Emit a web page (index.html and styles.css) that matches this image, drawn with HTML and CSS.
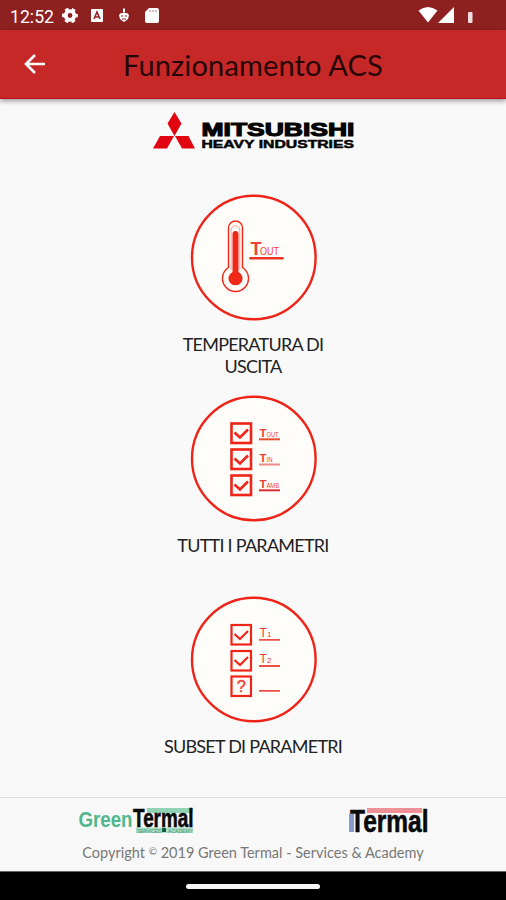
FILE: index.html
```html
<!DOCTYPE html>
<html lang="it">
<head>
<meta charset="utf-8">
<title>Funzionamento ACS</title>
<link rel="stylesheet" href="styles.css">
</head>
<body>
<div class="screen">
  <div class="status">
    <svg width="506" height="30" viewBox="0 0 506 30">
      <text class="clock" x="10" y="22.5" textLength="44" lengthAdjust="spacingAndGlyphs">12:52</text>
      <g fill="#fff">
        <circle cx="70" cy="15.5" r="4.3" fill="none" stroke="#fff" stroke-width="3.8"/>
        <circle cx="70" cy="15.5" r="6.600" fill="none" stroke="#fff" stroke-width="2.600" stroke-dasharray="3.600 3.310" stroke-dashoffset="1.800"/>
        <rect x="91" y="9" width="12" height="13" rx="1"/>
        <path d="M94 19l3-7 3 7M95 17h4" fill="none" stroke="#8f2020" stroke-width="1.500"/>
        <path d="M123 8.500h2v4h-2zM119 15q1-2 3-2h4q2 0 3 2l-1 4-4 3-4-3z"/>
        <path d="M121 16h2M125 16h2M122 19h4" stroke="#8f2020" stroke-width="1.200"/>
        <path d="M149 8h8q2 0 2 2v11q0 2-2 2h-10q-2 0-2-2v-9z"/>
        <path d="M150 10v2M153 10v2M156 10v2" stroke="#b87070" stroke-width="1"/>
        <path d="M418.500 10.500Q428 3.500 437.500 10.500L428 22.500z"/>
        <path d="M454 7v16h-16z"/>
        <rect x="468" y="12" width="4.500" height="11" rx="1" opacity=".85"/>
      </g>
    </svg>
  </div>
  <header class="appbar">
    <svg class="back" width="22" height="22" viewBox="0 0 22 22"><path d="M21 11H3M11 2L2 11l9 9" fill="none" stroke="#fff" stroke-width="2.600"/></svg>
    <h1>Funzionamento ACS</h1>
  </header>
  <main>
    <svg class="brand" width="204" height="40" viewBox="0 0 204 40">
      <path fill="#e00510" d="M21.500 0l7 11.500-7 12.500-7-12.500zM21 24l-7 12.500H0l7-12.500zM22 24l7 12.500H42l-6.500-12.500z"/>
      <text class="mitsu" x="48.500" y="23.800" font-size="18" textLength="153" lengthAdjust="spacingAndGlyphs">MITSUBISHI</text>
      <text class="heavy" x="48.500" y="36" font-size="11.500" textLength="152.500" lengthAdjust="spacingAndGlyphs">HEAVY INDUSTRIES</text>
    </svg>
    <section class="item">
      <svg class="disc" width="128" height="128" viewBox="0 0 128 128">
        <circle class="ring" cx="63.800" cy="63.500" r="61.800"/>
        <g fill="none" stroke="#f02818" stroke-width="1.400">
          <path d="M38.500 73.500V34a7 7 0 0 1 14 0v39.500a13 13 0 1 1-14 0z"/>
          <path d="M41.200 76V36a4.300 4.300 0 0 1 8.600 0v40" stroke-width=".7" opacity=".6"/>
        </g>
        <path fill="#f02818" d="M42.500 78V40q0-3 3-3t3 3v38a7 7 0 1 1-6 0z"/>
        <text class="tag strong" x="60.500" y="60.500" font-size="18">T</text>
        <text class="tag" x="70" y="60.500" font-size="10" textLength="19" lengthAdjust="spacingAndGlyphs">OUT</text>
        <path d="M60.500 64.300h32" stroke="#e83422" stroke-width="2.600" stroke-linecap="round"/>
      </svg>
      <p>TEMPERATURA DI<br>USCITA</p>
    </section>
    <section class="item">
      <svg class="disc" width="128" height="128" viewBox="0 0 128 128">
        <circle class="ring" cx="63.800" cy="63.500" r="61.800"/>
        <g class="box">
          <rect x="41.500" y="28.500" width="19.500" height="19.500"/><path d="M44.500 37.500l5.500 5 8-8"/>
          <rect x="41.500" y="54.500" width="19.500" height="19.500"/><path d="M44.500 63.500l5.500 5 8-8"/>
          <rect x="41.500" y="80.500" width="19.500" height="19.500"/><path d="M44.500 89.500l5.500 5 8-8"/>
        </g>
        <text class="tag strong" x="69.500" y="41.500" font-size="11.500">T</text><text class="tag" x="76.500" y="41.500" font-size="7" textLength="12" lengthAdjust="spacingAndGlyphs">OUT</text>
        <text class="tag strong" x="69.500" y="66.500" font-size="11.500">T</text><text class="tag" x="76.500" y="66.500" font-size="7" textLength="6" lengthAdjust="spacingAndGlyphs">IN</text>
        <text class="tag strong" x="69.500" y="92.500" font-size="11.500">T</text><text class="tag" x="76.500" y="92.500" font-size="7" textLength="12.500" lengthAdjust="spacingAndGlyphs">AMB</text>
        <path d="M69 44.300h21" stroke="#e85030" stroke-width="2"/>
        <path d="M69 69.500h21" stroke="#f08a88" stroke-width="2"/>
        <path d="M69 95.300h21" stroke="#d83030" stroke-width="2"/>
      </svg>
      <p>TUTTI I PARAMETRI</p>
    </section>
    <section class="item subset">
      <svg class="disc" width="128" height="128" viewBox="0 0 128 128">
        <circle class="ring" cx="63.800" cy="63.500" r="61.800"/>
        <g class="box thin">
          <rect x="41.500" y="29" width="19.500" height="19.500"/><path d="M44.500 38l5.500 5 8-8"/>
          <rect x="41.500" y="55" width="19.500" height="19.500"/><path d="M44.500 64l5.500 5 8-8"/>
          <rect x="41.500" y="80.500" width="19.500" height="19.500"/>
        </g>
        <text class="tag mark" x="51.300" y="96" font-size="16.500" text-anchor="middle">?</text>
        <text class="tag" x="69.500" y="41" font-size="12">T</text><text class="tag" x="77" y="41" font-size="8">1</text>
        <text class="tag" x="69.500" y="67" font-size="12">T</text><text class="tag" x="77" y="67" font-size="8">2</text>
        <path d="M69 43.800h21M69 70h21M69 94.800h21" stroke="#ed5145" stroke-width="1.800"/>
      </svg>
      <p>SUBSET DI PARAMETRI</p>
    </section>
  </main>
  <footer>
    <div class="logos">
      <svg width="118" height="30" viewBox="0 0 118 30">
        <rect x="69" y="1" width="46" height="5" fill="#91d3b5"/>
        <rect x="58" y="20.500" width="57" height="5.500" fill="#a9dcc5"/>
        <rect x="84" y="21" width="4" height="4" fill="#145b40"/>
        <text class="micro" x="59" y="25.500" textLength="24">SERVICES</text>
        <text class="micro" x="90" y="25.500" textLength="25">ACADEMY</text>
        <text class="logo green" x="0.500" y="20" font-size="22" textLength="54" lengthAdjust="spacingAndGlyphs">Green</text>
        <text class="logo dark" x="55" y="19.500" font-size="25" textLength="60.500" lengthAdjust="spacingAndGlyphs">Termal</text>
      </svg>
      <svg width="82" height="30" viewBox="0 0 82 30">
        <rect x="19" y="1" width="55" height="5" fill="#ed9197"/>
        <rect x="1" y="7" width="5" height="18" fill="#8799ca"/>
        <text class="logo dark" x="2" y="24.500" font-size="32" textLength="78.500" lengthAdjust="spacingAndGlyphs">Termal</text>
      </svg>
    </div>
    <p class="copy">Copyright <span>©</span> 2019 Green Termal - Services &amp; Academy</p>
  </footer>
  <div class="nav"><i></i></div>
</div>
</body>
</html>
```
FILE: styles.css
```css
* { box-sizing: border-box; }
body { margin: 0; background: #f9f9f9; font-family: Lato, "Liberation Sans", sans-serif; }
svg { display: block; overflow: visible; }
.screen { width: 506px; height: 900px; display: flex; flex-direction: column; overflow: hidden; }
.status { height: 30px; background: #8f2020; flex: none; }
.clock { font: 18.5px Roboto, sans-serif; fill: #fff; }
.appbar { height: 69px; flex: none; display: flex; align-items: center; padding-left: 24px; background: #c62828; border-bottom: 1px solid #c40d12; box-shadow: 0 2px 5px rgba(0,0,0,.4); }
.back { flex: none; }
h1 { margin: 2px 0 0 77px; font-size: 29px; line-height: 36px; font-weight: 400; color: #260505; white-space: nowrap; letter-spacing: .15px; }
main { flex: 1; min-height: 0; display: flex; flex-direction: column; align-items: center; padding-top: 13px; }
.brand { margin-left: 4px; flex: none; }
.mitsu, .heavy { font-family: "Liberation Sans", sans-serif; font-weight: 700; fill: #050505; stroke: #050505; stroke-width: 1.1px; }
.heavy { stroke-width: .5px; }
.item { width: 260px; height: 201px; flex: none; display: flex; flex-direction: column; align-items: center; }
.brand + .item { margin-top: 42px; }
.disc { flex: none; margin-left: 1px; }
.item p { margin: 11px 0 0; font-size: 18px; line-height: 22px; letter-spacing: -.75px; color: #222; text-align: center; white-space: nowrap; }
.ring { fill: #fffdfa; stroke: #ee2418; stroke-width: 2.4px; }
.tag { font-family: "Liberation Sans", sans-serif; fill: #ed4034; }
.strong { font-weight: 700; }
.mark { stroke: #ed4034; stroke-width: .4px; }
.box { fill: none; stroke: #ee2418; stroke-width: 2.6px; }
.thin { stroke-width: 2.2px; }
footer { height: 74px; flex: none; border-top: 1px solid #ddd; background: #f8f8f8; padding-top: 9px; }
.logos { display: flex; justify-content: space-between; padding: 0 76px 0 78px; }
.logo { font-family: "Liberation Sans", sans-serif; font-weight: 700; fill: #0a0a0a; }
.dark { stroke: #0a0a0a; stroke-width: .6px; }
.logo.green { fill: #4fb78b; }
.micro { font: 5px "Liberation Sans", sans-serif; fill: #4c9a78; }
.copy { margin: 7px 0 0; font-size: 14.5px; line-height: 18px; color: #777; text-align: center; white-space: nowrap; }
.copy span { font-size: 10px; vertical-align: 3px; line-height: 1; }
.nav { height: 29px; flex: none; background: #000; border-top: 1px solid #666; display: flex; align-items: center; justify-content: center; }
.nav i { width: 134px; height: 5px; border-radius: 3px; background: #f5f5f5; }
```
